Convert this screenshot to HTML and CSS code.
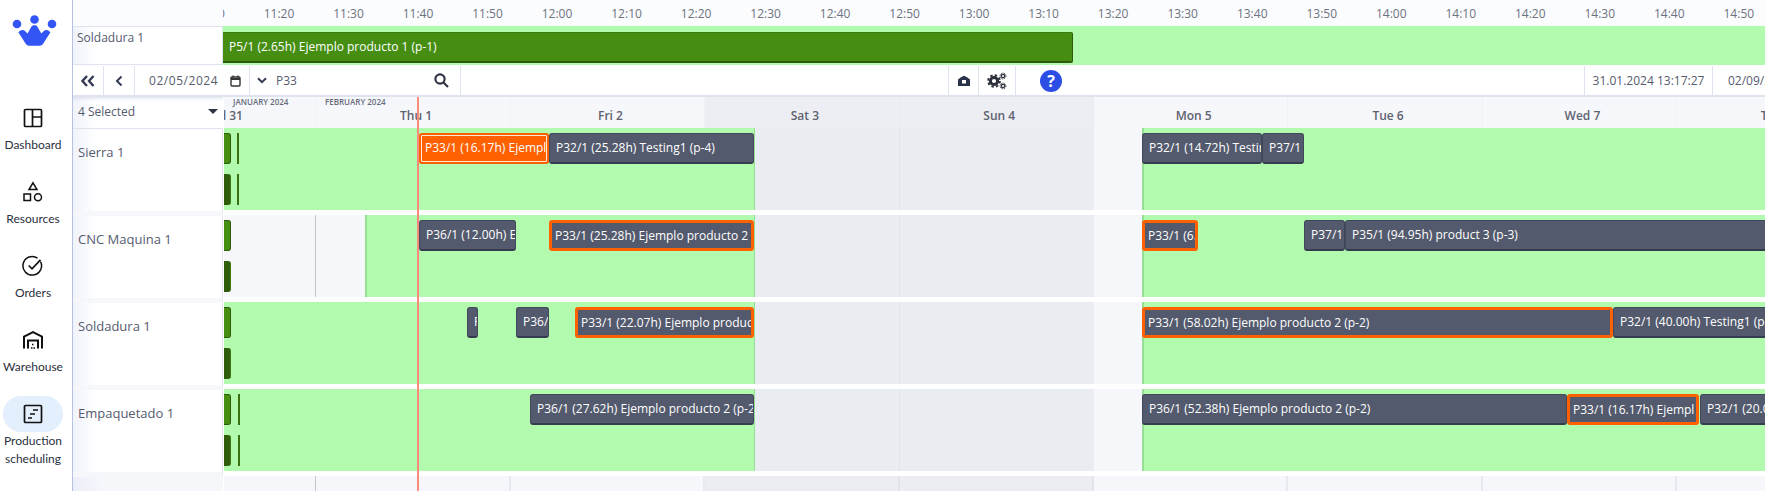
FILE: index.html
```html
<!DOCTYPE html>
<html lang="en">
<head>
<meta charset="utf-8">
<title>Production scheduling</title>
<link rel="stylesheet" href="styles.css">
</head>
<body>
<div class="app">
  <nav class="sidebar">
    <div class="logo">
      <svg width="72" height="100" viewBox="0 0 72 100">
        <circle cx="17" cy="24" r="4.300" fill="#3355f5"/>
        <circle cx="34.500" cy="19.500" r="4.300" fill="#3355f5"/>
        <circle cx="52" cy="24" r="4.300" fill="#3355f5"/>
        <path d="M18.500 32.500c1-2.500 4.500-3.500 6.500-1.500l2.500 2.500 4-7c1.200-1.800 4.600-1.800 5.800 0l4 7 2.500-2.500c2-2 5.500-1 6.500 1.500l-7 11c-.8 1.400-2 2.200-3.500 2.200h-10.800c-1.500 0-2.700-.8-3.500-2.200z" fill="#3355f5"/>
      </svg>
    </div>
    <a class="nav-item">
      <span class="nav-icon"><svg width="20" height="20" viewBox="0 0 20 20" fill="none" stroke="#111" stroke-width="1.700"><rect x="1.500" y="1.500" width="17" height="17" rx="1"/><path d="M9.500 1.500v17M9.500 9h9"/></svg></span>
      <span class="nav-label">Dashboard</span>
    </a>
    <a class="nav-item">
      <span class="nav-icon"><svg width="22" height="22" viewBox="0 0 22 22" fill="none" stroke="#111" stroke-width="1.500"><path d="M11 1.800l4 6.700H7z"/><rect x="2" y="13" width="6.500" height="6.500"/><circle cx="16" cy="16.200" r="3.500"/></svg></span>
      <span class="nav-label">Resources</span>
    </a>
    <a class="nav-item">
      <span class="nav-icon"><svg width="22" height="22" viewBox="0 0 22 22" fill="none" stroke="#111" stroke-width="1.500"><path d="M18.500 6.500a9.300 9.300 0 1 1-3-3.400"/><path d="M6.700 10.500l3.300 3.300 8.500-9" stroke-width="1.700"/></svg></span>
      <span class="nav-label">Orders</span>
    </a>
    <a class="nav-item">
      <span class="nav-icon"><svg width="22" height="22" viewBox="0 0 22 22" fill="none" stroke="#111" stroke-width="2"><path d="M2 19.500V7.500L11 3l9 4.500v12"/><path d="M6 19.500v-8h10v8"/><path d="M9 19h1.500M11.500 19H13M10 15.500h1.500" stroke-width="1.500"/></svg></span>
      <span class="nav-label">Warehouse</span>
    </a>
    <a class="nav-item active">
      <span class="nav-icon"><svg width="20" height="20" viewBox="0 0 20 20" fill="none" stroke="#111" stroke-width="1.700"><rect x="1.500" y="1.500" width="17" height="17" rx="1"/><path d="M10 6h5M7 10h5M5 14h4"/></svg></span>
      <span class="nav-label">Production<br>scheduling</span>
    </a>
  </nav>

  <main class="main">
    <div class="axis">
      <div class="axis-corner"></div>
      <div class="axis-track">
        <span class="tick first">11:10</span><span class="tick">11:20</span><span class="tick">11:30</span><span class="tick">11:40</span><span class="tick">11:50</span><span class="tick">12:00</span><span class="tick">12:10</span><span class="tick">12:20</span><span class="tick">12:30</span><span class="tick">12:40</span><span class="tick">12:50</span><span class="tick">13:00</span><span class="tick">13:10</span><span class="tick">13:20</span><span class="tick">13:30</span><span class="tick">13:40</span><span class="tick">13:50</span><span class="tick">14:00</span><span class="tick">14:10</span><span class="tick">14:20</span><span class="tick">14:30</span><span class="tick">14:40</span><span class="tick">14:50</span>
      </div>
    </div>

    <div class="pinned">
      <div class="pinned-label">Soldadura 1</div>
      <div class="pinned-track">
        <div class="pinned-task">P5/1 (2.65h) Ejemplo producto 1 (p-1)</div>
      </div>
    </div>

    <div class="toolbar">
      <div class="cell cell-first"><svg width="14" height="12" viewBox="0 0 14 12" fill="none" stroke="#353b55" stroke-width="2.400"><path d="M6 1L1.500 6 6 11M12.500 1L8 6l4.500 5"/></svg></div>
      <div class="cell cell-prev"><svg width="8" height="12" viewBox="0 0 8 12" fill="none" stroke="#353b55" stroke-width="2"><path d="M6.500 1.500L2 6l4.500 4.500"/></svg></div>
      <div class="cell cell-date"><span class="date-text">02/05/2024</span><svg width="11" height="12" viewBox="0 0 11 12" fill="none" stroke="#333" stroke-width="1.400"><rect x="1" y="2" width="9" height="9" rx="1"/><path d="M1 4h9" stroke-width="2"/><path d="M3 .500v2M8 .500v2"/></svg></div>
      <div class="cell cell-search">
        <svg width="10" height="7" viewBox="0 0 10 7" fill="none" stroke="#353b55" stroke-width="2"><path d="M1 1.200l4 4 4-4"/></svg>
        <span class="search-text">P33</span>
        <svg class="search-icon" width="15" height="15" viewBox="0 0 15 15" fill="none" stroke="#2f3545" stroke-width="2.200"><circle cx="6" cy="6" r="4.600"/><path d="M9.500 9.500l4.500 4.500"/></svg>
      </div>
      <div class="cell cell-blank"></div>
      <div class="cell cell-camera"><svg width="14" height="12" viewBox="0 0 14 12"><path fill-rule="evenodd" d="M1 11V4.500L4 2.300 7 .800l3 1.500 3 2.200V11zM5 5v3.500h4V5z" fill="#28324a"/></svg></div>
      <div class="cell cell-gears"><svg width="20" height="18" viewBox="0 0 20 18" fill="none" stroke="#2b2f3a"><circle cx="7" cy="9" r="3.600" stroke-width="3"/><circle cx="7" cy="9" r="5.800" stroke-width="2" stroke-dasharray="2.400 2.155"/><circle cx="16" cy="4" r="1.700" stroke-width="1.200"/><circle cx="16" cy="14" r="1.700" stroke-width="1.200"/><circle cx="16" cy="4" r="2.900" stroke-width="1" stroke-dasharray="1.300 1"/><circle cx="16" cy="14" r="2.900" stroke-width="1" stroke-dasharray="1.300 1"/></svg></div>
      <div class="cell cell-help"><span class="help">?</span></div>
      <div class="cell cell-now">31.01.2024 13:17:27</div>
      <div class="cell cell-range">02/09/2024</div>
    </div>

    <div class="board">
      <div class="names">
        <div class="selector"><span>4 Selected</span><span class="caret"></span></div>
        <div class="name">Sierra 1</div>
        <div class="name">CNC Maquina 1</div>
        <div class="name">Soldadura 1</div>
        <div class="name">Empaquetado 1</div>
        <div class="names-foot"></div>
      </div>

      <div class="chart">
        <div class="now-line"></div>
        <div class="days">
          <div class="day lead">Wed 31</div>
          <div class="day">Thu 1</div>
          <div class="day">Fri 2</div>
          <div class="day weekend">Sat 3</div>
          <div class="day weekend">Sun 4</div>
          <div class="day">Mon 5</div>
          <div class="day">Tue 6</div>
          <div class="day">Wed 7</div>
          <div class="day">Thu 8</div>
          <span class="month jan">JANUARY 2024</span>
          <span class="month feb">FEBRUARY 2024</span>
        </div>

        <div class="row">
          <div class="off weekend-band"></div><div class="sun-line"></div><div class="off morning-band"></div>
          <div class="stub top"></div><div class="stub bottom"></div>
          <div class="sliver top" style="left:13px"></div><div class="sliver bottom" style="left:13px"></div>
          <div class="task hot" style="left:195px;width:130px">P33/1 (16.17h) Ejempl</div>
          <div class="task" style="left:325px;width:205px">P32/1 (25.28h) Testing1 (p-4)</div>
          <div class="task" style="left:918px;width:120px">P32/1 (14.72h) Testing</div>
          <div class="task" style="left:1038px;width:42px">P37/1</div>
        </div>

        <div class="row">
          <div class="off lead-band"></div><div class="lead-line"></div>
          <div class="off weekend-band"></div><div class="sun-line"></div><div class="off morning-band"></div>
          <div class="stub top"></div><div class="stub bottom"></div>
          <div class="task" style="left:195px;width:97px">P36/1 (12.00h) Ej</div>
          <div class="task sel" style="left:325px;width:205px">P33/1 (25.28h) Ejemplo producto 2</div>
          <div class="task sel" style="left:918px;width:56px">P33/1 (6.</div>
          <div class="task" style="left:1080px;width:41px">P37/1</div>
          <div class="task" style="left:1121px;width:600px">P35/1 (94.95h) product 3 (p-3)</div>
        </div>

        <div class="row">
          <div class="off weekend-band"></div><div class="sun-line"></div><div class="off morning-band"></div>
          <div class="stub top"></div><div class="stub bottom"></div>
          <div class="task" style="left:243px;width:11px">P</div>
          <div class="task" style="left:292px;width:33px">P36/</div>
          <div class="task sel" style="left:351px;width:179px">P33/1 (22.07h) Ejemplo produc</div>
          <div class="task sel" style="left:918px;width:471px">P33/1 (58.02h) Ejemplo producto 2 (p-2)</div>
          <div class="task" style="left:1389px;width:300px">P32/1 (40.00h) Testing1 (p-</div>
        </div>

        <div class="row">
          <div class="off weekend-band"></div><div class="sun-line"></div><div class="off morning-band"></div>
          <div class="stub top"></div><div class="stub bottom"></div>
          <div class="sliver top" style="left:14px"></div><div class="sliver bottom" style="left:14px"></div>
          <div class="task" style="left:306px;width:224px">P36/1 (27.62h) Ejemplo producto 2 (p-2</div>
          <div class="task" style="left:918px;width:425px">P36/1 (52.38h) Ejemplo producto 2 (p-2)</div>
          <div class="task sel" style="left:1343px;width:132px">P33/1 (16.17h) Ejempl</div>
          <div class="task" style="left:1476px;width:200px">P32/1 (20.0</div>
        </div>

        <div class="foot">
          <div class="foot-cell lead"></div>
          <div class="foot-cell"></div>
          <div class="foot-cell"></div>
          <div class="foot-cell weekend"></div>
          <div class="foot-cell weekend"></div>
          <div class="foot-cell"></div>
          <div class="foot-cell"></div>
          <div class="foot-cell"></div>
          <div class="foot-cell"></div>
        </div>
      </div>
    </div>
  </main>
</div>
</body>
</html>
```

FILE: styles.css
```css
* { box-sizing: border-box; }
html, body { margin: 0; height: 100%; overflow: hidden; background: #fff; }
body { font-family: "Open Sans", "Noto Sans", sans-serif; font-size: 12px; color: #555b6e; }

.app { display: flex; width: 1765px; height: 491px; overflow: hidden; }

/* Sidebar */
.sidebar { width: 73px; flex: none; display: flex; flex-direction: column; align-items: flex-start; background: #fff; border-right: 1px solid #b9c1de; }
.logo { height: 100px; width: 72px; flex: none; }
.logo svg { display: block; }
.nav-item { display: flex; flex-direction: column; align-items: center; height: 74px; width: 66px; flex: none; }
.nav-icon { width: 60px; height: 36px; flex: none; display: flex; align-items: center; justify-content: center; border-radius: 18px; }
.nav-icon svg { display: block; }
.nav-label { font-family: Lato, "Open Sans", sans-serif; font-size: 12px; line-height: 18px; color: #2b3040; text-align: center; white-space: nowrap; }
.active .nav-icon { background: #e3effc; }

/* Main */
.main { flex: 1; min-width: 0; display: flex; flex-direction: column; overflow: hidden; }

.axis { display: flex; height: 26px; flex: none; background: #fbfcfe; }
.axis-corner { width: 150px; flex: none; }
.axis-track { flex: 1; min-width: 0; display: flex; overflow: hidden; }
.tick { flex: none; width: 69.520px; line-height: 27px; text-align: center; color: #6d7280; font-size: 12px; }
.tick.first { margin-left: -48.300px; }

.pinned { display: flex; height: 39px; flex: none; }
.pinned-label { width: 150px; flex: none; padding: 2px 0 0 4px; line-height: 18px; border-top: 1px solid #dfe3ee; border-bottom: 1px solid #dfe3ee; border-right: 1px solid #dfe3ee; background: linear-gradient(90deg, #f1f3fb, #fff 24px); font-size: 12px; }
.pinned-track { flex: 1; min-width: 0; background: #b2fbae; padding-top: 6px; }
.pinned-task { width: 850px; height: 31px; padding-left: 6px; line-height: 28px; background: #458e12; border-bottom: 2px solid #2f5c0b; border-right: 1px solid #2f5c0b; border-top: 1px solid #3b7a10; border-radius: 0 2px 2px 0; color: #fff; font-size: 12px; white-space: nowrap; }

.toolbar { display: flex; height: 32px; flex: none; background: #fff; border-top: 1px solid #fff; border-bottom: 2px solid #dfe3ee; }
.cell { flex: none; display: flex; align-items: center; justify-content: center; border-right: 1px solid #dfe3ee; height: 100%; }
.cell-first { width: 31px; }
.cell-prev { width: 31px; }
.cell-date { width: 115px; justify-content: flex-start; padding-left: 14px; }
.date-text { width: 81px; letter-spacing: .55px; color: #555b6e; }
.cell-search { width: 211px; justify-content: flex-start; padding-left: 7px; }
.search-text { margin-left: 9px; flex: 1; color: #555b6e; }
.search-icon { margin-right: 11px; }
.cell-blank { width: 488px; }
.cell-camera { width: 30px; }
.cell-gears { width: 37px; }
.cell-help { flex: 1; min-width: 0; justify-content: flex-start; padding-left: 24px; }
.help { width: 22px; height: 22px; border-radius: 50%; background: #2d4ee4; color: #fff; font-weight: 700; font-size: 16px; line-height: 22px; text-align: center; }
.cell-now { width: 128px; }
.cell-range { width: 52px; flex: none; justify-content: flex-start; padding-left: 15px; border-right: 0; white-space: nowrap; overflow: hidden; }

.board { flex: 1; min-height: 0; display: flex; }

.names { width: 151px; flex: none; display: flex; flex-direction: column; }
.selector { height: 32px; flex: none; width: 150px; display: flex; align-items: center; justify-content: space-between; padding: 0 5px 2px; border-bottom: 1px solid #dfe3ee; background: linear-gradient(90deg, #f1f3fb, #fff 24px); box-shadow: inset 0 5px 5px -5px #c8cce0; }
.caret { width: 0; height: 0; border-left: 5px solid transparent; border-right: 5px solid transparent; border-top: 5px solid #2f3545; }
.name { height: 87px; flex: none; width: 150px; padding: 13px 0 0 5px; font-size: 13px; line-height: 20px; border-right: 1px solid #dfe3ee; border-bottom: 5px solid #f6f7fa; background: linear-gradient(90deg, #f1f3fb, #fff 24px); }
.names-foot { flex: 1; width: 150px; background: linear-gradient(90deg, #eceefa, #f6f7fa 30px); }

.chart { flex: 1; min-width: 0; position: relative; overflow: hidden; display: flex; flex-direction: column; }
.now-line { position: absolute; z-index: 3; left: 193px; top: 0; bottom: 0; width: 2px; background: #f98b7c; }

.days { display: flex; height: 31px; flex: none; position: relative; background: #f6f7fa; }
.day { flex: none; width: 194.400px; padding: 10px 0 0 6px; text-align: center; line-height: 18px; font-weight: 600; color: #5e6270; background: #f6f7fa; border-right: 1px solid #f1f2f5; }
.day.lead { margin-left: -102px; }
.day.weekend { background: #eceef3; border-right-color: #e8eaef; }
.month { position: absolute; top: 0; font-size: 8px; line-height: 10px; font-weight: 600; color: #666b7a; white-space: nowrap; }
.month.jan { left: 9px; }
.month.feb { left: 101px; }

.row { position: relative; height: 82px; flex: none; margin-bottom: 5px; background: #b2fbae; overflow: hidden; }
.off { position: absolute; top: 0; bottom: 0; }
.weekend-band { left: 530px; width: 340px; background: #e9ecf1; border-left: 1px solid #96df94; }
.sun-line { position: absolute; top: 0; bottom: 0; left: 675px; width: 1px; background: #e2e4e9; }
.morning-band { left: 870px; width: 50px; background: #f6f7fa; border-right: 2px solid #96df94; }
.lead-band { left: 0; width: 143px; background: #f6f7fa; border-right: 2px solid #96df94; }
.lead-line { position: absolute; top: 0; bottom: 0; left: 91px; width: 1px; background: #c6c6c8; }

.stub { position: absolute; left: 0; width: 7px; height: 31px; border-radius: 0 3px 3px 0; }
.sliver { position: absolute; width: 2px; height: 31px; background: #3b7010; }
.top { top: 5px; }
.bottom { top: 46px; }
.stub.top { background: #458e12; border: 1px solid #2f5c0b; border-left: 0; }
.stub.bottom { background: #2f5c0b; border-right: 1px solid #3f7a10; }

.task { position: absolute; z-index: 2; top: 5px; height: 31px; padding: 0 0 0 6px; line-height: 27px; background: #535a6d; border: 1px solid #42485b; border-bottom: 2px solid #363c4f; border-radius: 3px; color: #fff; font-size: 12px; white-space: nowrap; overflow: hidden; }
.task.sel { padding-left: 3px; line-height: 25px; border: 3px solid #ff6000; }
.task.hot { padding-left: 4px; line-height: 25px; background: #ff6000; border: 2px solid #ff6000; box-shadow: inset 0 0 0 1px #ffe9d8; }

.foot { flex: 1; min-height: 0; display: flex; }
.foot-cell { flex: none; width: 194.400px; background: #f6f7fa; border-right: 2px solid #e7e9ee; }
.foot-cell.lead { margin-left: -102px; border-right: 1px solid #c6c6c8; }
.foot-cell.weekend { background: #ebedf2; border-right-color: #e2e4e9; }
```
